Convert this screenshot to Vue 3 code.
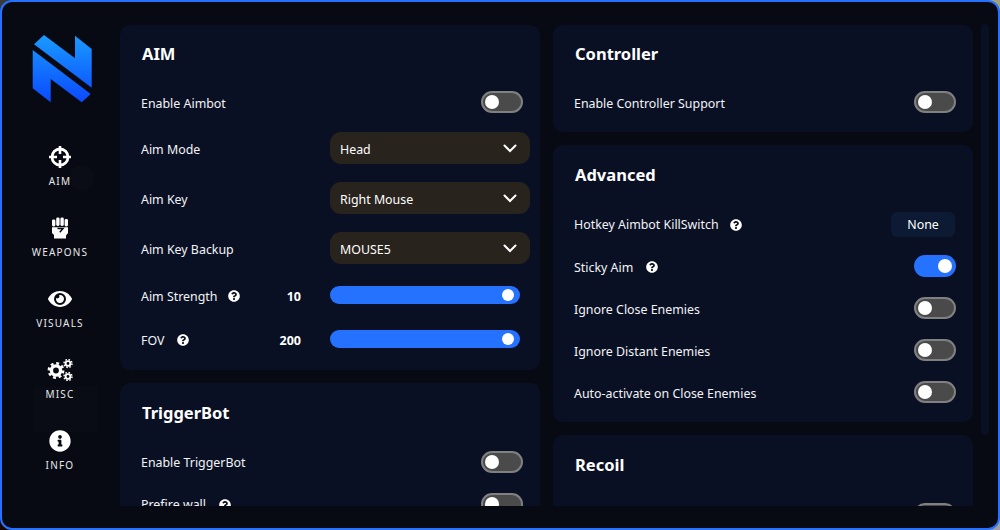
<script setup>
const nav = [
  { label: 'AIM', icon: 'aim' },
  { label: 'WEAPONS', icon: 'fist' },
  { label: 'VISUALS', icon: 'eye' },
  { label: 'MISC', icon: 'cogs' },
  { label: 'INFO', icon: 'info' }
]
const q = 'M504 256c0 136.997-111.043 248-248 248S8 392.997 8 256C8 119.083 119.043 8 256 8s248 111.083 248 248zM262.655 90c-54.497 0-89.255 22.957-116.549 63.758-3.536 5.286-2.353 12.415 2.715 16.258l34.699 26.31c5.205 3.947 12.621 3.008 16.665-2.122 17.864-22.658 30.113-35.797 57.303-35.797 20.429 0 45.698 13.148 45.698 32.958 0 14.976-12.363 22.667-32.534 33.976C247.128 238.528 216 254.941 216 296v4c0 6.627 5.373 12 12 12h56c6.627 0 12-5.373 12-12v-1.333c0-28.462 83.186-29.647 83.186-106.667 0-58.002-60.165-102-116.531-102zM256 338c-25.365 0-46 20.635-46 46 0 25.364 20.635 46 46 46s46-20.636 46-46c0-25.365-20.635-46-46-46z'
</script>

<template>
  <div class="stage">
    <div class="window">
      <div class="scrollthumb"></div>
      <aside class="side">
        <svg class="logo" width="60" height="68" viewBox="32 35 60 68">
          <defs>
            <linearGradient id="lg" x1="0" y1="35" x2="0" y2="103" gradientUnits="userSpaceOnUse">
              <stop offset="0" stop-color="#1a9bff" />
              <stop offset="1" stop-color="#0a48ff" />
            </linearGradient>
          </defs>
          <polygon fill="url(#lg)" points="34,44.3 44,35 75,58.3 75,35.7 91.7,49 91.7,87.7" />
          <polygon fill="url(#lg)" points="32.7,50 90.7,94 81.7,102.3 50.7,79 50.7,102.3 32.7,88.3" />
        </svg>
        <nav class="nav">
          <div v-for="n in nav" :key="n.label" class="navitem">
            <svg v-if="n.icon === 'aim'" class="ico" width="22" height="22" viewBox="0 0 22 22">
              <circle cx="11" cy="11" r="8" fill="none" stroke="#fff" stroke-width="2.8"/>
              <path d="M11 0v8M11 14v8M0 11h8M14 11h8" stroke="#fff" stroke-width="2.6" fill="none"/>
            </svg>
            <svg v-else-if="n.icon === 'fist'" class="ico" width="18" height="22" viewBox="0 0 18 22">
              <rect x="1" y="2.5" width="3.4" height="7" rx="1.4" fill="#fff"/>
              <rect x="5.2" y="0.5" width="3.4" height="8.5" rx="1.4" fill="#fff"/>
              <rect x="9.4" y="0.5" width="3.4" height="8.5" rx="1.4" fill="#fff"/>
              <rect x="13.6" y="2" width="3.4" height="7.5" rx="1.4" fill="#fff"/>
              <path fill="#fff" d="M1 10.2H17V16l-2 2.5V21.5H3V18L1 16z"/>
              <path d="M6.5 11.6H12L8.8 15.2" fill="none" stroke="#070a13" stroke-width="1.5"/>
            </svg>
            <svg v-else-if="n.icon === 'eye'" class="ico" width="24" height="22" viewBox="0 0 576 512"><path fill="#fff" d="M572.52 241.4C518.29 135.59 410.93 64 288 64S57.68 135.64 3.48 241.41a32.35 32.35 0 0 0 0 29.19C57.71 376.41 165.07 448 288 448s230.32-71.64 284.52-177.41a32.35 32.35 0 0 0 0-29.19zM288 400a144 144 0 1 1 144-144 143.93 143.93 0 0 1-144 144zm0-240a95.31 95.31 0 0 0-25.31 3.79 47.85 47.85 0 0 1-66.9 66.9A95.78 95.78 0 1 0 288 160z"/></svg>
            <svg v-else-if="n.icon === 'cogs'" class="ico" width="26" height="22" viewBox="0 0 26 22">
              <g fill="none" stroke="#fff">
                <circle cx="9" cy="11.5" r="4.6" stroke-width="3.4"/>
                <circle cx="9" cy="11.5" r="7.2" stroke-width="2.4" stroke-dasharray="2.9 2.75"/>
                <circle cx="21" cy="4.5" r="2.4" stroke-width="1.9"/>
                <circle cx="21" cy="4.5" r="4" stroke-width="1.4" stroke-dasharray="1.6 1.54"/>
                <circle cx="21" cy="17.5" r="2.4" stroke-width="1.9"/>
                <circle cx="21" cy="17.5" r="4" stroke-width="1.4" stroke-dasharray="1.6 1.54"/>
              </g>
            </svg>
            <svg v-else class="ico" width="22" height="22" viewBox="0 0 512 512"><path fill="#fff" d="M256 8C119.043 8 8 119.083 8 256c0 136.997 111.043 248 248 248s248-111.003 248-248C504 119.083 392.957 8 256 8zm0 110c23.196 0 42 18.804 42 42s-18.804 42-42 42-42-18.804-42-42 18.804-42 42-42zm56 254c0 6.627-5.373 12-12 12h-88c-6.627 0-12-5.373-12-12v-24c0-6.627 5.373-12 12-12h12v-64h-12c-6.627 0-12-5.373-12-12v-24c0-6.627 5.373-12 12-12h64c6.627 0 12 5.373 12 12v100h12c6.627 0 12 5.373 12 12v24z"/></svg>
            <span class="navlabel">{{ n.label }}</span>
          </div>
        </nav>
      </aside>
      <main class="scroll">
        <div class="col">
          <section class="panel first">
            <h2>AIM</h2>
            <div class="row r42"><span class="lbl">Enable Aimbot</span><span class="tg"></span></div>
            <div class="row r50"><span class="lbl">Aim Mode</span><div class="sel"><span>Head</span><svg width="14" height="9" viewBox="0 0 14 9"><path d="M1.5 1.5 7 7l5.5-5.5" fill="none" stroke="#fff" stroke-width="2" stroke-linecap="round"/></svg></div></div>
            <div class="row r50"><span class="lbl">Aim Key</span><div class="sel"><span>Right Mouse</span><svg width="14" height="9" viewBox="0 0 14 9"><path d="M1.5 1.5 7 7l5.5-5.5" fill="none" stroke="#fff" stroke-width="2" stroke-linecap="round"/></svg></div></div>
            <div class="row r50"><span class="lbl">Aim Key Backup</span><div class="sel"><span>MOUSE5</span><svg width="14" height="9" viewBox="0 0 14 9"><path d="M1.5 1.5 7 7l5.5-5.5" fill="none" stroke="#fff" stroke-width="2" stroke-linecap="round"/></svg></div></div>
            <div class="row r44"><span class="lbl">Aim Strength</span><svg class="q tight" viewBox="0 0 512 512"><path fill="#fff" :d="q"/></svg><b class="val">10</b><div class="slider"><i></i></div></div>
            <div class="row r44"><span class="lbl">FOV</span><svg class="q" viewBox="0 0 512 512"><path fill="#fff" :d="q"/></svg><b class="val">200</b><div class="slider"><i></i></div></div>
          </section>
          <section class="panel">
            <h2>TriggerBot</h2>
            <div class="row r42"><span class="lbl up">Enable TriggerBot</span><span class="tg"></span></div>
            <div class="row r42"><span class="lbl up">Prefire wall</span><svg class="q" viewBox="0 0 512 512"><path fill="#fff" :d="q"/></svg><span class="tg"></span></div>
          </section>
        </div>
        <div class="col">
          <section class="panel first">
            <h2>Controller</h2>
            <div class="row r42"><span class="lbl">Enable Controller Support</span><span class="tg"></span></div>
          </section>
          <section class="panel">
            <h2>Advanced</h2>
            <div class="row r42"><span class="lbl up">Hotkey Aimbot KillSwitch</span><svg class="q tight" viewBox="0 0 512 512"><path fill="#fff" :d="q"/></svg><span class="btn">None</span></div>
            <div class="row r42"><span class="lbl">Sticky Aim</span><svg class="q" viewBox="0 0 512 512"><path fill="#fff" :d="q"/></svg><span class="tg on"></span></div>
            <div class="row r42"><span class="lbl">Ignore Close Enemies</span><span class="tg"></span></div>
            <div class="row r42"><span class="lbl">Ignore Distant Enemies</span><span class="tg"></span></div>
            <div class="row r42"><span class="lbl">Auto-activate on Close Enemies</span><span class="tg"></span></div>
          </section>
          <section class="panel">
            <h2>Recoil</h2>
            <div class="row r42"><span class="tg"></span></div>
          </section>
        </div>
      </main>
    </div>
  </div>
</template>

<style scoped>
.stage {
  width: 1000px;
  height: 530px;
  background:
    linear-gradient(#3a3a3a, #3a3a3a) left top / 16px 16px no-repeat,
    linear-gradient(#a8a078, #a8a078) right top / 16px 16px no-repeat,
    linear-gradient(#1a0505, #1a0505) left bottom / 16px 16px no-repeat,
    linear-gradient(#a0a0a8, #a0a0a8) right bottom / 16px 16px no-repeat;
}
.window {
  position: relative;
  box-sizing: border-box;
  width: 1000px;
  height: 530px;
  border: 2px solid #2472ff;
  border-radius: 12px;
  background:
    radial-gradient(circle 13px at 80px 176px, rgba(255, 255, 255, 0.01) 90%, transparent 100%),
    linear-gradient(rgba(255, 255, 255, 0.006), rgba(255, 255, 255, 0.006)) 32px 385px / 64px 45px no-repeat,
    #070a13;
  display: flex;
  overflow: hidden;
  font-family: "Noto Sans", "Open Sans", sans-serif;
  color: #fff;
}
.side {
  width: 118px;
  flex: none;
  display: flex;
  flex-direction: column;
  align-items: center;
}
.logo { margin-top: 33px; margin-right: -1px; }
.nav { margin-top: 43px; display: flex; flex-direction: column; width: 116px; margin-right: 2px; }
.navitem {
  height: 71px;
  display: flex;
  flex-direction: column;
  align-items: center;
}
.ico { height: 22px; display: block; }
.navlabel {
  margin-top: 6px;
  font-size: 10px;
  line-height: 14px;
  letter-spacing: 1.2px;
  color: #e8e8ea;
}
.scroll {
  margin-top: 23px;
  height: 481px;
  display: flex;
  gap: 13px;
  overflow: hidden;
  align-items: flex-start;
}
.col { width: 420px; display: flex; flex-direction: column; gap: 13px; }
.panel {
  background: #0a1024;
  border-radius: 10px;
  padding: 0 17px 9px 21px;
}
.panel h2 {
  margin: 0;
  height: 58px;
  padding: 18px 0 0 1px;
  box-sizing: border-box;
  font-size: 16.5px;
  line-height: 24px;
  font-weight: 700;
}
.panel.first h2 { height: 56px; padding-top: 17px; }
.row { display: flex; align-items: center; font-size: 12.4px; }
.r42 { height: 42px; }
.r50 { height: 50px; }
.r44 { height: 44px; }
.lbl { color: #f2f3f6; line-height: 18px; padding-top: 4px; }
.lbl.up { padding-top: 2px; }
.tg {
  position: relative;
  box-sizing: border-box;
  margin-left: auto;
  width: 42px;
  height: 22px;
  border-radius: 11px;
  background: #4a4a4a;
  border: 2px solid #808080;
}
.tg::after {
  content: "";
  position: absolute;
  left: 2px;
  top: 2px;
  width: 14px;
  height: 14px;
  border-radius: 50%;
  background: #fff;
}
.tg.on { background: #2472ff; border-color: #2472ff; }
.tg.on::after { left: 22px; }
.sel {
  margin-left: auto;
  margin-right: -7px;
  width: 200px;
  height: 32px;
  box-sizing: border-box;
  border-radius: 11px;
  background: #29231e;
  padding: 2px 13px 0 10px;
  display: flex;
  align-items: center;
  justify-content: space-between;
  font-size: 12.4px;
}
.sel svg { margin-top: -2px; }
.q { width: 12px; height: 12px; margin-left: 13px; margin-top: 2px; flex: none; }
.q.tight { margin-left: 11px; }
.val {
  margin-left: auto;
  margin-right: 29px;
  padding-top: 2px;
  font-size: 12.5px;
  font-weight: 700;
}
.slider {
  position: relative;
  width: 190px;
  height: 18px;
  margin-right: 3px;
  border-radius: 9px;
  background: #2472ff;
}
.slider i {
  position: absolute;
  right: 6px;
  top: 3px;
  width: 12px;
  height: 12px;
  border-radius: 50%;
  background: #fff;
}
.btn {
  margin-left: auto;
  margin-right: 1px;
  width: 64px;
  height: 25px;
  border-radius: 6px;
  background: #0c1a33;
  text-align: center;
  line-height: 25px;
  font-size: 12.4px;
}
.scrollthumb {
  position: absolute;
  left: 979px;
  top: 22px;
  width: 8px;
  height: 411px;
  border-radius: 4px;
  background: #0a1024;
}
</style>

<style>
html, body { margin: 0; background: #070a13; }
</style>
